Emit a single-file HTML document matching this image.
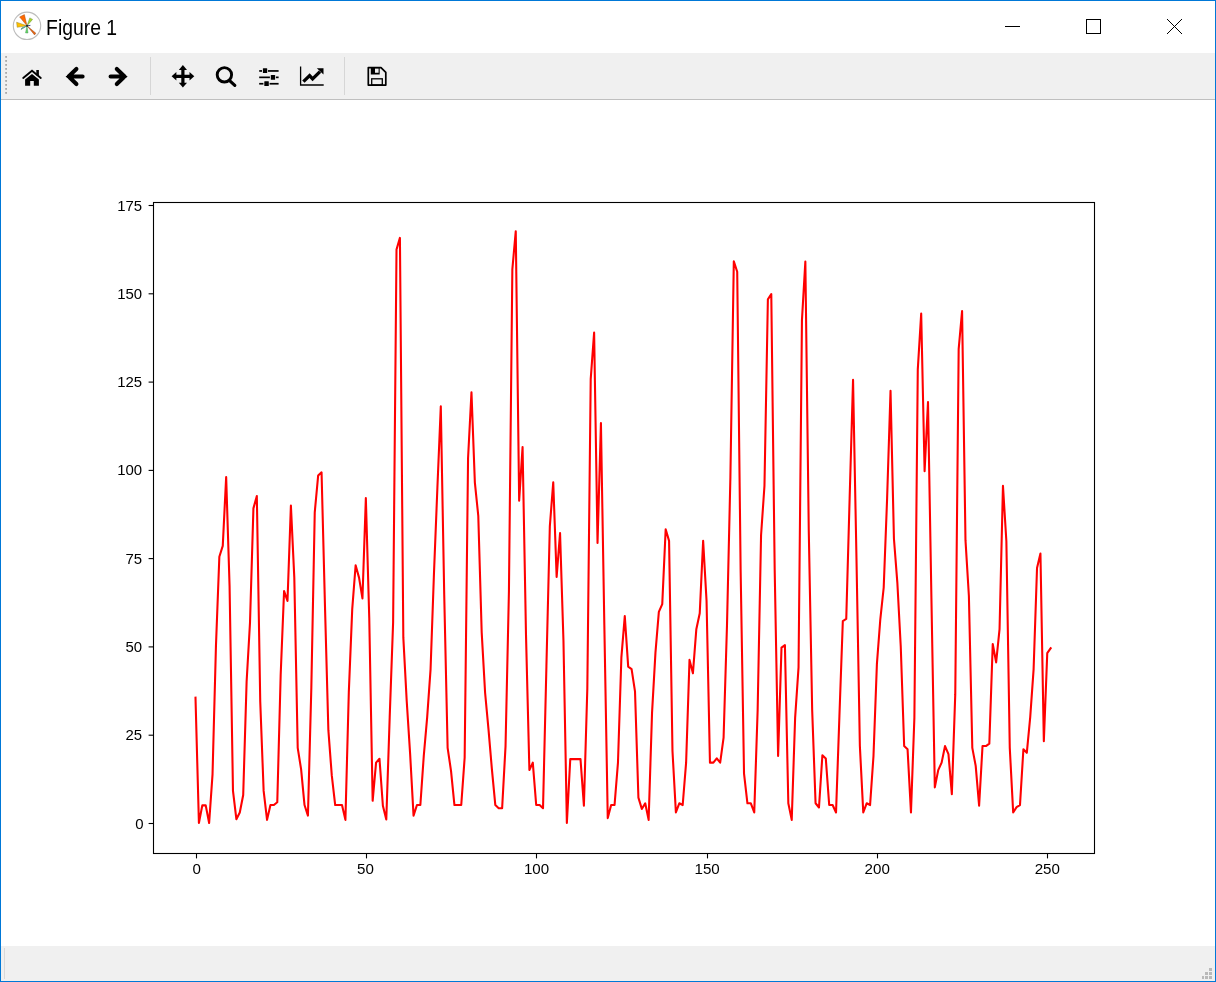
<!DOCTYPE html>
<html><head><meta charset="utf-8"><style>
html,body{margin:0;padding:0;width:1216px;height:982px;overflow:hidden;background:#fff}
svg{position:absolute;left:0;top:0;display:block;will-change:transform}
text{font-family:"Liberation Sans",sans-serif}
</style></head><body>
<svg width="1216" height="982" viewBox="0 0 1216 982">
<rect x="0" y="0" width="1216" height="982" fill="#ffffff"/>
<!-- toolbar -->
<rect x="1" y="53" width="1214" height="46" fill="#f0f0f0"/>
<rect x="1" y="99" width="1214" height="1" fill="#bfbfbf"/>
<!-- grip -->
<g fill="#a9a9a9"><rect x="5.2" y="56" width="1.8" height="1.8"/><rect x="5.2" y="60" width="1.8" height="1.8"/><rect x="5.2" y="64" width="1.8" height="1.8"/><rect x="5.2" y="68" width="1.8" height="1.8"/><rect x="5.2" y="72" width="1.8" height="1.8"/><rect x="5.2" y="76" width="1.8" height="1.8"/><rect x="5.2" y="80" width="1.8" height="1.8"/><rect x="5.2" y="84" width="1.8" height="1.8"/><rect x="5.2" y="88" width="1.8" height="1.8"/><rect x="5.2" y="92" width="1.8" height="1.8"/></g>
<rect x="150" y="57" width="1" height="38" fill="#d6d6d6"/>
<rect x="344" y="57" width="1" height="38" fill="#d6d6d6"/>
<!-- status bar -->
<rect x="1" y="946" width="1214" height="35" fill="#f0f0f0"/>
<rect x="4" y="948" width="1" height="31" fill="#d8d8d8"/>
<g fill="#b9b9b9">
<rect x="1209" y="968" width="3" height="3"/>
<rect x="1205" y="972" width="3" height="3"/><rect x="1209" y="972" width="3" height="3"/>
<rect x="1202" y="976" width="2" height="3"/><rect x="1205" y="976" width="3" height="3"/><rect x="1209" y="976" width="3" height="3"/>
</g>
<!-- border -->
<rect x="0.5" y="0.5" width="1215" height="981" fill="none" stroke="#0078d7" stroke-width="1"/>
<!-- title -->
<g>
<circle cx="27" cy="25.8" r="13.7" fill="#fff" stroke="#bcbcbc" stroke-width="1.1"/>
<polygon points="27,25.8 19.6,16.9 24.4,14.6" fill="#ff6a00" stroke="#9a4a1a" stroke-width="0.45" stroke-linejoin="round"/>
<polygon points="27,25.8 16.6,22.2 17.2,27.3" fill="#ffc000" stroke="#8a7a2a" stroke-width="0.45" stroke-linejoin="round"/>
<polygon points="27,25.8 29.8,17.9 32.6,19.4" fill="#a6d62a" stroke="#6a8a3a" stroke-width="0.45" stroke-linejoin="round"/>
<polygon points="27,25.8 25.5,32.9 28.0,33.0" fill="#62dc62" stroke="#4a8a5a" stroke-width="0.45" stroke-linejoin="round"/>
<polygon points="27,25.8 34.5,34.9 35.9,33.2" fill="#e8640c" stroke="#8a4a2a" stroke-width="0.45" stroke-linejoin="round"/>
<polygon points="27,25.8 21.2,29.4 21.8,28.0" fill="#5f9c8c" stroke="#5f9c8c" stroke-width="0.9" stroke-linejoin="round"/>
<line x1="27" y1="25.8" x2="30.4" y2="25.4" stroke="#2b3f7f" stroke-width="0.9"/>
<circle cx="27" cy="25.8" r="0.9" fill="#111"/>
</g>
<text x="46.1" y="35" font-size="21.2" fill="#000" textLength="71" lengthAdjust="spacingAndGlyphs">Figure 1</text>
<g stroke="#000" stroke-width="1" fill="none">
<line x1="1005" y1="26.5" x2="1020" y2="26.5"/>
<rect x="1086.5" y="19.5" width="14" height="14"/>
<line x1="1167" y1="19" x2="1182" y2="34"/><line x1="1182" y1="19" x2="1167" y2="34"/>
</g>
<!-- toolbar icons -->
<g fill="#000">
<!-- home -->
<path d="M23.2,78 L32,70.8 L40.8,78" stroke="#000" stroke-width="1.9" fill="none" stroke-linecap="round" stroke-linejoin="miter"/>
<rect x="36.3" y="70" width="2.6" height="5.5"/>
<path d="M25.1,79.4 L32,73.9 L38.9,79.4 L38.9,85.7 L33.8,85.7 L33.8,81 L30.2,81 L30.2,85.7 L25.1,85.7 Z"/>
<!-- back -->
<path d="M76.4,69 L68.6,76.5 L76.4,84 M68.6,76.5 L82.6,76.5" stroke="#000" stroke-width="4.1" fill="none" stroke-linecap="round" stroke-linejoin="miter"/>
<!-- forward -->
<path d="M116.8,69 L124.6,76.5 L116.8,84 M124.6,76.5 L110.6,76.5" stroke="#000" stroke-width="4.1" fill="none" stroke-linecap="round" stroke-linejoin="miter"/>
<!-- move -->
<path d="M182.9,69 L182.9,84 M174.5,76.3 L191.3,76.3" stroke="#000" stroke-width="3.2" fill="none"/>
<polygon points="182.9,64.9 187,69.9 178.8,69.9"/>
<polygon points="182.9,87.6 187,82.7 178.8,82.7"/>
<polygon points="171.6,76.3 176.4,72 176.4,80.6"/>
<polygon points="194.3,76.3 189.5,72 189.5,80.6"/>
<!-- zoom -->
<circle cx="224.4" cy="74.8" r="7.2" stroke="#000" stroke-width="2.9" fill="none"/>
<line x1="229.6" y1="80.6" x2="234.8" y2="85.4" stroke="#000" stroke-width="3.2" stroke-linecap="round"/>
<!-- sliders -->
<rect x="259.2" y="70.1" width="19.4" height="1.7"/>
<rect x="259.2" y="76.5" width="19.4" height="1.7"/>
<rect x="259.2" y="82.9" width="19.4" height="1.7"/>
<rect x="262.0" y="67.6" width="6" height="5.9" fill="#f0f0f0"/>
<rect x="269.9" y="74.3" width="6" height="6" fill="#f0f0f0"/>
<rect x="263.4" y="80.6" width="6.2" height="6" fill="#f0f0f0"/>
<rect x="262.9" y="68.3" width="4.3" height="4.6" rx="0.5"/>
<rect x="270.8" y="75" width="4.3" height="4.7" rx="0.5"/>
<rect x="264.3" y="81.3" width="4.5" height="4.7" rx="0.5"/>
<!-- chart -->
<path d="M300.6,66.6 L300.6,85 L323.7,85" stroke="#000" stroke-width="1.3" fill="none"/>
<path d="M303.4,81.6 L309.6,75.6 L312.6,78.9 L320,71.6" stroke="#000" stroke-width="3.4" fill="none" stroke-linejoin="miter"/>
<polygon points="316.8,68.2 323.5,68.2 323.5,74.6"/>
<!-- save -->
<path d="M368.3,67.6 L381,67.6 L385.8,72.4 L385.8,85.1 L368.3,85.1 Z" stroke="#000" stroke-width="1.7" fill="none" stroke-linejoin="round"/>
<path d="M370.8,67.2 L379.7,67.2 L379.7,74.4 L370.8,74.4 Z M375,68.2 L375,72.8 L378.6,72.8 L378.6,68.2 Z" fill-rule="evenodd"/>
<rect x="371.7" y="78.8" width="10.6" height="6.2" stroke="#000" stroke-width="1.3" fill="none"/>
</g>
<!-- axes -->
<rect x="153.5" y="202.5" width="941" height="651" fill="none" stroke="#000" stroke-width="1.1"/>
<g stroke="#000" stroke-width="1.1"><line x1="148.6" y1="823.5" x2="153.5" y2="823.5"/><line x1="148.6" y1="735.2" x2="153.5" y2="735.2"/><line x1="148.6" y1="646.9" x2="153.5" y2="646.9"/><line x1="148.6" y1="558.6" x2="153.5" y2="558.6"/><line x1="148.6" y1="470.4" x2="153.5" y2="470.4"/><line x1="148.6" y1="382.1" x2="153.5" y2="382.1"/><line x1="148.6" y1="293.8" x2="153.5" y2="293.8"/><line x1="148.6" y1="205.5" x2="153.5" y2="205.5"/><line x1="196.5" y1="853.5" x2="196.5" y2="858.4"/><line x1="366.5" y1="853.5" x2="366.5" y2="858.4"/><line x1="536.5" y1="853.5" x2="536.5" y2="858.4"/><line x1="707.5" y1="853.5" x2="707.5" y2="858.4"/><line x1="877.5" y1="853.5" x2="877.5" y2="858.4"/><line x1="1047.5" y1="853.5" x2="1047.5" y2="858.4"/></g>
<g font-size="14" fill="#000"><text transform="translate(143.6,828.5) scale(1.07,1)" text-anchor="end">0</text><text transform="translate(142.2,740.2) scale(1.07,1)" text-anchor="end">25</text><text transform="translate(142.2,651.9) scale(1.07,1)" text-anchor="end">50</text><text transform="translate(142.2,563.6) scale(1.07,1)" text-anchor="end">75</text><text transform="translate(142.2,475.4) scale(1.07,1)" text-anchor="end">100</text><text transform="translate(142.2,387.1) scale(1.07,1)" text-anchor="end">125</text><text transform="translate(142.2,298.8) scale(1.07,1)" text-anchor="end">150</text><text transform="translate(142.2,210.5) scale(1.07,1)" text-anchor="end">175</text><text transform="translate(196.8,874) scale(1.08,1)" text-anchor="middle">0</text><text transform="translate(365.4,874) scale(1.08,1)" text-anchor="middle">50</text><text transform="translate(536.5,874) scale(1.08,1)" text-anchor="middle">100</text><text transform="translate(707.1,874) scale(1.08,1)" text-anchor="middle">150</text><text transform="translate(877.2,874) scale(1.08,1)" text-anchor="middle">200</text><text transform="translate(1047.3,874) scale(1.08,1)" text-anchor="middle">250</text></g>
<polyline points="195.50,697.69 198.91,823.05 202.31,805.39 205.72,805.39 209.13,823.05 212.53,774.32 215.94,646.48 219.35,556.78 222.76,545.84 226.16,476.97 229.57,586.09 232.98,790.91 236.38,819.17 239.79,812.46 243.20,794.98 246.61,681.79 250.01,622.47 253.42,508.40 256.83,496.04 260.23,701.22 263.64,790.91 267.05,819.87 270.45,805.04 273.86,805.04 277.27,802.21 280.68,674.73 284.08,591.04 287.49,600.92 290.90,505.58 294.30,577.62 297.71,747.83 301.12,769.37 304.52,805.04 307.93,815.63 311.34,687.44 314.75,512.29 318.15,475.56 321.56,472.38 324.97,605.87 328.37,730.17 331.78,775.38 335.19,805.04 338.59,805.04 342.00,805.04 345.41,819.87 348.81,692.39 352.22,609.40 355.63,565.26 359.04,577.62 362.44,598.45 365.85,498.16 369.26,618.23 372.66,800.80 376.07,762.66 379.48,758.78 382.88,805.75 386.29,819.52 389.70,717.11 393.11,622.47 396.51,249.55 399.92,237.90 403.33,637.65 406.73,701.22 410.14,754.19 413.55,815.63 416.96,805.04 420.36,805.04 423.77,755.95 427.18,717.11 430.58,669.08 433.99,572.67 437.40,487.57 440.80,406.34 444.21,594.22 447.62,747.83 451.02,770.79 454.43,805.04 457.84,805.04 461.25,805.04 464.65,757.72 468.06,458.26 471.47,392.22 474.87,482.62 478.28,515.82 481.69,632.35 485.10,692.74 488.50,729.47 491.91,769.37 495.32,805.04 498.72,808.22 502.13,808.22 505.54,746.07 508.94,591.04 512.35,269.33 515.76,231.19 519.16,500.63 522.57,446.96 525.98,634.12 529.39,770.08 532.79,762.66 536.20,805.04 539.61,805.04 543.01,808.22 546.42,665.90 549.83,526.41 553.24,482.27 556.64,576.91 560.05,533.12 563.46,640.83 566.86,823.05 570.27,759.13 573.68,759.13 577.08,759.13 580.49,759.13 583.90,805.75 587.31,688.86 590.71,379.15 594.12,332.54 597.53,543.01 600.93,422.94 604.34,625.29 607.75,818.11 611.15,805.04 614.56,805.04 617.97,762.66 621.38,657.43 624.78,616.11 628.19,666.61 631.60,669.08 635.00,691.33 638.41,797.62 641.82,808.92 645.22,803.27 648.63,819.87 652.04,712.87 655.44,652.84 658.85,611.87 662.26,604.10 665.67,529.24 669.07,540.89 672.48,751.01 675.89,812.46 679.29,803.27 682.70,805.04 686.11,762.66 689.51,659.90 692.92,673.32 696.33,629.18 699.74,613.28 703.14,540.89 706.55,600.92 709.96,762.66 713.36,762.66 716.77,758.43 720.18,762.66 723.59,737.59 726.99,625.29 730.40,476.97 733.81,261.20 737.21,271.80 740.62,569.50 744.03,773.61 747.43,803.27 750.84,803.27 754.25,812.46 757.65,710.05 761.06,535.24 764.47,485.80 767.88,299.34 771.28,294.05 774.69,569.85 778.10,755.95 781.50,647.54 784.91,645.07 788.32,803.27 791.73,819.87 795.13,717.81 798.54,667.32 801.95,320.18 805.35,261.56 808.76,529.94 812.17,710.05 815.57,803.27 818.98,807.51 822.39,755.25 825.79,758.43 829.20,805.04 832.61,805.04 836.02,812.46 839.42,716.05 842.83,621.05 846.24,618.94 849.64,498.16 853.05,379.86 856.46,557.84 859.87,746.07 863.27,812.46 866.68,803.27 870.09,805.04 873.49,755.95 876.90,664.14 880.31,619.29 883.71,587.51 887.12,498.16 890.53,390.81 893.94,538.77 897.34,582.56 900.75,646.48 904.16,746.07 907.56,749.24 910.97,812.46 914.38,717.81 917.78,369.62 921.19,313.47 924.60,471.32 928.00,402.11 931.41,597.75 934.82,787.38 938.23,770.08 941.63,762.66 945.04,746.07 948.45,754.19 951.85,794.09 955.26,694.15 958.67,349.14 962.08,311.00 965.48,540.18 968.89,595.98 972.30,747.83 975.70,765.84 979.11,805.75 982.52,746.07 985.92,746.07 989.33,743.59 992.74,644.01 996.14,662.37 999.55,629.18 1002.96,485.80 1006.37,541.24 1009.77,747.83 1013.18,812.46 1016.59,807.16 1019.99,805.04 1023.40,749.24 1026.81,752.78 1030.22,717.11 1033.62,669.08 1037.03,568.08 1040.44,553.60 1043.84,741.12 1047.25,653.19 1050.66,648.25" fill="none" stroke="#ff0000" stroke-width="2.08" stroke-linejoin="round" stroke-linecap="square"/>
</svg>
</body></html>
